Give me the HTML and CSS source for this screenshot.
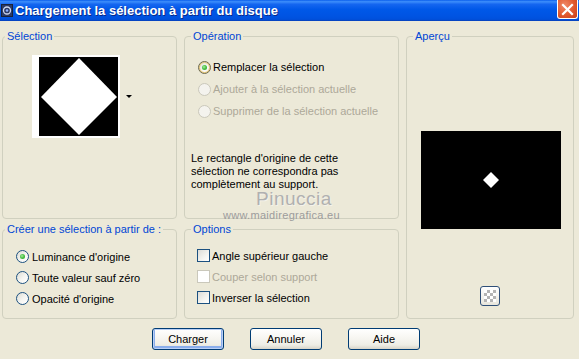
FILE: index.html
```html
<!DOCTYPE html>
<html lang="fr">
<head>
<meta charset="utf-8">
<title>Chargement la sélection à partir du disque</title>
<link rel="stylesheet" href="styles.css">
</head>
<body>
<div class="titlebar">
  <svg class="ticon" width="12" height="13" viewBox="0 0 12 13">
    <rect x="0" y="0" width="12" height="13" fill="#1a2238"/>
    <rect x="1" y="1" width="10" height="11" fill="#2c3a66"/>
    <circle cx="6" cy="6.5" r="3.5" fill="none" stroke="#cfd8f0" stroke-width="1.3"/>
    <circle cx="6" cy="6.5" r="1.3" fill="#8fb0ff"/>
  </svg>
  <span class="ttext">Chargement la sélection à partir du disque</span>
  <div class="close">
    <svg width="13" height="13" viewBox="0 0 13 13">
      <path d="M2 2 L11 11 M11 2 L2 11" stroke="#fff" stroke-width="2.2" stroke-linecap="square"/>
    </svg>
  </div>
</div>

<div class="main">
  <fieldset class="grp g-sel">
    <legend class="lg-left">Sélection</legend>
    <div class="sel-row">
      <div class="thumb">
        <svg width="79" height="79" viewBox="0 0 79 79">
          <rect width="79" height="79" fill="#000"/>
          <polygon points="40,1 78,40 40,78 2,40" fill="#fff"/>
        </svg>
      </div>
      <span class="ddarrow"></span>
    </div>
  </fieldset>

  <fieldset class="grp g-op">
    <legend class="lg">Opération</legend>
    <div class="radios op-radios">
      <div class="row22"><span class="radio checked hover"></span><span class="lbl">Remplacer la sélection</span></div>
      <div class="row22 disabled"><span class="radio"></span><span class="lbl">Ajouter à la sélection actuelle</span></div>
      <div class="row22 disabled"><span class="radio"></span><span class="lbl">Supprimer de la sélection actuelle</span></div>
    </div>
    <p class="note">Le rectangle d'origine de cette<br>sélection ne correspondra pas<br>complètement au support.</p>
  </fieldset>

  <fieldset class="grp g-prev">
    <legend class="lg">Aperçu</legend>
    <div class="prev-col">
      <div class="prev">
        <svg width="140" height="98" viewBox="0 0 140 98">
          <rect width="140" height="98" fill="#000"/>
          <polygon points="70,41 78,49 70,57 62,49" fill="#fff"/>
        </svg>
      </div>
      <div class="chk-btn"><span class="checker"></span></div>
    </div>
  </fieldset>

  <fieldset class="grp g-create">
    <legend class="lg-left">Créer une sélection à partir de :</legend>
    <div class="radios create-radios">
      <div class="row21"><span class="radio checked"></span><span class="lbl l3">Luminance d'origine</span></div>
      <div class="row21"><span class="radio"></span><span class="lbl l3">Toute valeur sauf zéro</span></div>
      <div class="row21"><span class="radio"></span><span class="lbl l3">Opacité d'origine</span></div>
    </div>
  </fieldset>

  <fieldset class="grp g-opt">
    <legend class="lg">Options</legend>
    <div class="radios opt-checks">
      <div class="row21"><span class="cbox"></span><span class="lbl">Angle supérieur gauche</span></div>
      <div class="row21 disabled"><span class="cbox"></span><span class="lbl">Couper selon support</span></div>
      <div class="row21"><span class="cbox"></span><span class="lbl">Inverser la sélection</span></div>
    </div>
  </fieldset>
</div>

<div class="buttons">
  <button class="btn default">Charger</button>
  <button class="btn">Annuler</button>
  <button class="btn">Aide</button>
</div>

<div class="wm wm-name">Pinuccia</div>
<div class="wm wm-url">www.maidiregrafica.eu</div>
</body>
</html>
```

FILE: styles.css
```css
html, body {
  margin: 0;
  padding: 0;
}
body {
  width: 579px;
  height: 359px;
  overflow: hidden;
  background: #ECE9D8;
  font-family: "Liberation Sans", Arial, sans-serif;
  font-size: 11px;
  color: #000;
  position: relative;
}

/* Title bar */
.titlebar {
  height: 21px;
  display: flex;
  align-items: center;
  background: linear-gradient(to bottom, #0A5EEC 0%, #3D8EFB 8%, #1566F0 20%, #0058E8 45%, #0054E3 75%, #0050DC 92%, #0840B8 100%);
}
.ticon {
  margin-left: 1px;
  flex: none;
}
.ttext {
  margin-left: 2px;
  color: #fff;
  font-weight: bold;
  font-size: 13px;
  line-height: 21px;
  text-shadow: 1px 1px 0 #0A2A8A;
  white-space: nowrap;
}
.close {
  margin-left: auto;
  margin-right: 1px;
  align-self: flex-start;
  width: 19px;
  height: 18px;
  border: 1px solid #fff;
  border-top: none;
  border-radius: 0 0 3px 3px;
  background: radial-gradient(circle at 35% 30%, #F08A68 0%, #E0582E 55%, #C8401C 100%);
  display: flex;
  align-items: center;
  justify-content: center;
}

/* Main grid */
.main {
  display: grid;
  grid-template-columns: 175px 215px 168px;
  grid-template-rows: 189px 96px;
  column-gap: 7px;
  row-gap: 4px;
  padding: 9px 0 0 2px;
}
.grp {
  margin: 0;
  padding: 0;
  border: 1px solid #D0D0BF;
  border-radius: 4px;
  min-width: 0;
}
.grp legend {
  color: #0046D5;
  line-height: 13px;
  padding: 0 2px;
}
.lg-left { margin-left: 2px; }
.lg { margin-left: 6px; }

.g-sel { grid-column: 1; grid-row: 1; }
.g-op { grid-column: 2; grid-row: 1; }
.g-prev { grid-column: 3; grid-row: 1 / span 2; }
.g-create { grid-column: 1; grid-row: 2; }
.g-opt { grid-column: 2; grid-row: 2; }

/* Sélection */
.sel-row {
  display: flex;
  align-items: center;
  margin: 12px 0 0 29px;
}
.thumb {
  width: 80px;
  height: 79px;
  padding: 2px 1px 2px 7px;
  background: #fff;
  display: flex;
}
.thumb svg { display: block; }
.ddarrow {
  margin-left: 6px;
  width: 0;
  height: 0;
  border-left: 3px solid transparent;
  border-right: 3px solid transparent;
  border-top: 3px solid #000;
}

/* radios & checkboxes */
.op-radios { padding: 13px 0 0 13px; }
.create-radios { padding: 10px 0 0 13px; }
.opt-checks { padding: 9px 0 0 12px; }
.row22, .row21 {
  display: flex;
  align-items: center;
  white-space: nowrap;
}
.row22 { height: 22px; }
.row21 { height: 21px; }
.lbl { margin-left: 2px; }
.l3 { margin-left: 3px; }
.disabled .lbl { color: #ACA899; }

.radio {
  flex: none;
  box-sizing: border-box;
  width: 13px;
  height: 13px;
  border-radius: 50%;
  border: 1px solid #1C5180;
  background: linear-gradient(135deg, #DCDCD3 0%, #F6F6F2 55%, #FFFFFF 100%);
  position: relative;
}
.radio.hover {
  border-color: #6E6A4E;
  box-shadow: inset 0 0 0 1px #E9C979;
}
.radio.checked::after {
  content: "";
  position: absolute;
  left: 3px;
  top: 3px;
  width: 5px;
  height: 5px;
  border-radius: 50%;
  background: radial-gradient(circle at 40% 40%, #A8EBA0 0%, #4CC248 45%, #21A121 100%);
}
.disabled .radio {
  border-color: #CAC8BB;
  background: #F4F3EE;
}

.cbox {
  flex: none;
  box-sizing: border-box;
  width: 13px;
  height: 13px;
  border: 1px solid #1C5180;
  background: linear-gradient(135deg, #DCDCD7 0%, #F4F4F0 60%, #FFFFFF 100%);
}
.disabled .cbox {
  border-color: #CAC8BB;
  background: #FFFFFF;
}

.note {
  margin: 30px 0 0 6px;
  line-height: 13px;
}

/* Aperçu */
.prev-col {
  display: flex;
  flex-direction: column;
  align-items: center;
  padding-top: 88px;
}
.prev { width: 140px; height: 98px; margin-left: 2px; }
.prev svg { display: block; }
.chk-btn {
  margin-top: 57px;
  box-sizing: border-box;
  width: 20px;
  height: 20px;
  border: 1px solid #2F4F78;
  border-radius: 3px;
  background: linear-gradient(to bottom, #FFFFFF, #E8E6DC);
  display: flex;
  align-items: center;
  justify-content: center;
}
.checker {
  width: 12px;
  height: 12px;
  background-color: #fff;
  background-image:
    linear-gradient(45deg, #B4B4B4 25%, transparent 25%, transparent 75%, #B4B4B4 75%),
    linear-gradient(45deg, #B4B4B4 25%, transparent 25%, transparent 75%, #B4B4B4 75%);
  background-size: 6px 6px;
  background-position: 0 0, 3px 3px;
}

/* Buttons */
.buttons {
  display: flex;
  gap: 26px;
  padding: 9px 0 0 152px;
}
.btn {
  box-sizing: border-box;
  width: 72px;
  height: 22px;
  border: 1px solid #003C74;
  border-radius: 3px;
  background: linear-gradient(to bottom, #FFFFFF 0%, #F8F7F3 40%, #EEEDE5 80%, #D8D4C8 100%);
  font-family: "Liberation Sans", Arial, sans-serif;
  font-size: 11px;
  color: #000;
  padding: 0;
}
.btn.default {
  box-shadow: inset 0 0 0 1px #B9CFF5, inset 0 -1px 0 2px #8BAEEC;
}

/* Watermark overlay */
.wm {
  position: absolute;
  white-space: nowrap;
}
.wm-name {
  left: 256px;
  top: 192px;
  font-size: 19px;
  line-height: 14px;
  letter-spacing: 0.5px;
  color: #B0B0B0;
  text-shadow: 1px 1px 0 #F4F2EA;
}
.wm-url {
  left: 223px;
  top: 209px;
  font-size: 11px;
  line-height: 13px;
  letter-spacing: 0.3px;
  color: #9C9C9C;
}
```
